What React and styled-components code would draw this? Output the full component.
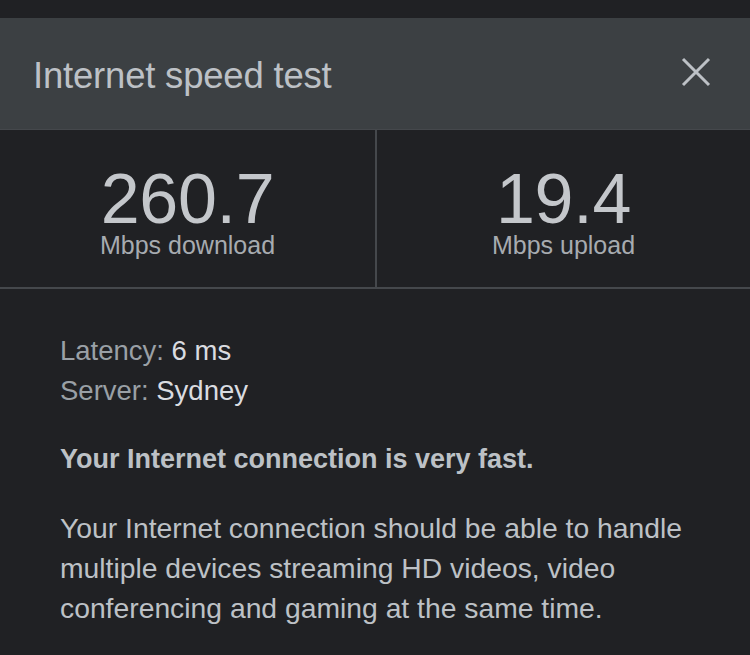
import React from 'react'
import styled, { createGlobalStyle } from 'styled-components'

const GlobalStyle = createGlobalStyle`
	html, body {
		margin: 0;
		padding: 0;
		background: #202124;
	}

	body {
		font-family: 'Liberation Sans', Arial, sans-serif;
		-webkit-font-smoothing: antialiased;
	}
`

const Page = styled.div`
	width: 750px;
	height: 655px;
	overflow: hidden;
	background: #202124;
	color: #bdc1c6;
`

const TopStrip = styled.div`
	height: 18px;
	background: #202124;
`

const Header = styled.header`
	height: 112px;
	box-sizing: border-box;
	padding: 0 38px 0 33px;
	background: #3c4043;
	border-bottom: 1px solid #45484c;
	display: flex;
	align-items: center;
	justify-content: space-between;
`

const Title = styled.h1`
	margin: 4px 0 0;
	font-size: 36.5px;
	font-weight: normal;
	color: #bdc1c6;
	letter-spacing: -0.2px;
`

const CloseButton = styled.button`
	border: none;
	background: none;
	padding: 0;
	margin-bottom: 4px;
	width: 32px;
	height: 32px;
	display: flex;
	align-items: center;
	justify-content: center;
	color: #bdc1c6;
	cursor: pointer;
`

const Stats = styled.section`
	display: grid;
	grid-template-columns: 375px 1fr;
	height: 157px;
	border-bottom: 2px solid #45484c;
`

const Stat = styled.div`
	display: flex;
	flex-direction: column;
	align-items: center;
	padding-top: 36px;
	border-left: ${props => (props.divided ? '2px solid #45484c' : 'none')};
`

const Value = styled.div`
	font-size: 70px;
	line-height: 66px;
	color: #c4c7cb;
	letter-spacing: -0.3px;
`

const Unit = styled.div`
	font-size: 25px;
	line-height: 26px;
	color: #a7abb0;
`

const Details = styled.section`
	padding: 42px 60px 0;
`

const InfoLine = styled.div`
	font-size: 27.5px;
	line-height: 40px;
	color: #9aa0a6;

	strong {
		font-weight: normal;
		color: #dadce0;
	}
`

const Verdict = styled.p`
	margin: 28px 0 0;
	font-size: 27px;
	line-height: 40px;
	font-weight: bold;
	color: #bdc1c6;
`

const Description = styled.p`
	margin: 29px 0 0;
	font-size: 28.3px;
	line-height: 40px;
	color: #bdc1c6;
`

const CloseIcon = () => (
	<svg width="30" height="30" viewBox="0 0 30 30">
		<path d="M2 2 L28 28 M28 2 L2 28" stroke="currentColor" strokeWidth="3" fill="none" />
	</svg>
)

const App = () => (
	<Page>
		<GlobalStyle />
		<TopStrip />
		<Header>
			<Title>Internet speed test</Title>
			<CloseButton aria-label="Close">
				<CloseIcon />
			</CloseButton>
		</Header>
		<Stats>
			<Stat>
				<Value>260.7</Value>
				<Unit>Mbps download</Unit>
			</Stat>
			<Stat divided>
				<Value>19.4</Value>
				<Unit>Mbps upload</Unit>
			</Stat>
		</Stats>
		<Details>
			<InfoLine>
				Latency: <strong>6 ms</strong>
			</InfoLine>
			<InfoLine>
				Server: <strong>Sydney</strong>
			</InfoLine>
			<Verdict>Your Internet connection is very fast.</Verdict>
			<Description>
				Your Internet connection should be able to handle multiple devices streaming HD videos,
				video conferencing and gaming at the same time.
			</Description>
		</Details>
	</Page>
)

export default App
